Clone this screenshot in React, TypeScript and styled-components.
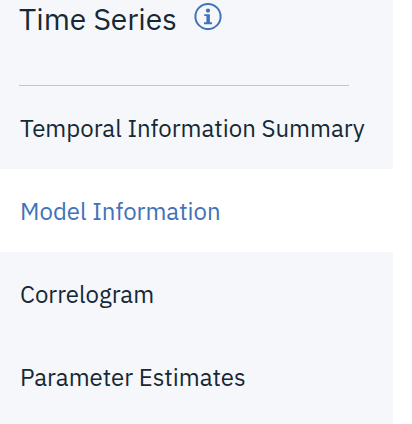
import React from "react";
import styled, { createGlobalStyle } from "styled-components";

const GlobalStyle = createGlobalStyle`
  * { box-sizing: border-box; }
  html, body { margin: 0; background: #ffffff; overflow: hidden; }
`;

const Sidebar = styled.aside`
  width: 393px;
  height: 424px;
  overflow: hidden;
  background: #f5f7fb;
  color: #152934;
  font-family: "IBM Plex Sans", "Noto Sans", sans-serif;
`;

const Header = styled.header`
  display: flex;
  align-items: flex-start;
  width: 330px;
  height: 86px;
  margin-left: 19px;
  border-bottom: 1px solid #c3c6cc;
`;

const Title = styled.h1`
  width: 175px;
  margin: 0;
  font-size: 30px;
  line-height: 37px;
  font-weight: 400;
  white-space: nowrap;
`;

const InfoIcon = styled.svg`
  width: 28px;
  height: 28px;
  margin-top: 2px;
  flex: none;
`;

const Menu = styled.nav`
  display: flex;
  flex-direction: column;
`;

const Item = styled.a<{ $selected?: boolean }>`
  display: flex;
  flex: none;
  align-items: center;
  height: 83px;
  padding: 1px 0 0 20px;
  font-size: 24px;
  line-height: 32px;
  white-space: nowrap;
  color: ${(p) => (p.$selected ? "#4173b8" : "inherit")};
  background: ${(p) => (p.$selected ? "#ffffff" : "transparent")};
`;

const items = [
  { label: "Temporal Information Summary" },
  { label: "Model Information", selected: true },
  { label: "Correlogram" },
  { label: "Parameter Estimates" },
];

export default function App() {
  return (
    <>
      <GlobalStyle />
      <Sidebar>
        <Header>
          <Title>Time Series</Title>
          <InfoIcon viewBox="0 0 28 28" aria-label="Information">
            <circle cx="14" cy="14.5" r="12.6" fill="none" stroke="#4173b8" strokeWidth="2" />
            <circle cx="14" cy="8.6" r="2.1" fill="#4173b8" />
            <path d="M10.2 12.2H15.9V20.3H18V22.2H10V20.3H12.4V14H10.2Z" fill="#4173b8" />
          </InfoIcon>
        </Header>
        <Menu>
          {items.map((item) => (
            <Item key={item.label} $selected={item.selected}>
              {item.label}
            </Item>
          ))}
        </Menu>
      </Sidebar>
    </>
  );
}
